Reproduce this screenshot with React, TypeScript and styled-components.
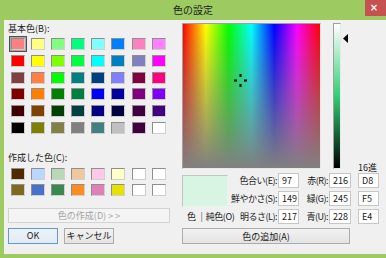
import React from "react";
import styled, { createGlobalStyle, css } from "styled-components";

const FONT = `"Noto Sans CJK JP", "Noto Sans", sans-serif`;

const GlobalStyle = createGlobalStyle`
  html, body { margin: 0; padding: 0; background: #9dcb62; }
  body { font-family: ${FONT}; }
  #root { width: 386px; height: 258px; overflow: hidden; }
`;

const BASIC = [
  ["#ff8080", "#ffff80", "#80ff80", "#00ff80", "#80ffff", "#0080ff", "#ff80c0", "#ff80ff"],
  ["#ff0000", "#ffff00", "#80ff00", "#00ff40", "#00ffff", "#0080c0", "#8080c0", "#ff00ff"],
  ["#804040", "#ff8040", "#00ff00", "#008080", "#004080", "#8080ff", "#800040", "#ff0080"],
  ["#800000", "#ff8000", "#008000", "#008040", "#0000ff", "#0000a0", "#800080", "#8000ff"],
  ["#400000", "#804000", "#004000", "#004040", "#000080", "#000040", "#400040", "#400080"],
  ["#000000", "#808000", "#808040", "#808080", "#408080", "#c0c0c0", "#400040", "#ffffff"],
];

const CUSTOM = [
  ["#502800", "#b8d8ff", "#b8d8b8", "#f0c8a0", "#ffc8e8", "#ffffc8", "#ffffff", "#ffffff"],
  ["#806820", "#4870c8", "#388850", "#ff8c20", "#e080b8", "#e8e000", "#ffffff", "#ffffff"],
];

const HUE = 97;
const SAT = 149;
const LUM = 217;
const SPEC_W = 139;
const SPEC_H = 146;

const Window = styled.div`
  width: 386px;
  height: 258px;
  background: #9dcb62;
  display: flex;
  flex-direction: column;
  font-family: ${FONT};
  font-size: 9px;
  color: #1a1a1a;
`;

const TitleBar = styled.div`
  height: 20px;
  display: grid;
  grid-template-columns: 1fr auto 1fr;
  align-items: start;
`;

const Title = styled.div`
  grid-column: 2;
  font-size: 10px;
  line-height: 20px;
  color: #1e1e1e;
`;

const CloseButton = styled.div`
  grid-column: 3;
  justify-self: end;
  width: 21px;
  height: 16px;
  background: #c75050;
  color: #fff;
  font-family: "DejaVu Sans", sans-serif;
  font-size: 10px;
  font-weight: bold;
  line-height: 16px;
  text-align: center;
  padding-right: 3px;
  box-sizing: border-box;
`;

const Body = styled.div`
  flex: 1;
  margin: 0 0 4px 4px;
  background: #f0f0f0;
  display: flex;
  padding-top: 3px;
  box-sizing: border-box;
`;

const LeftPane = styled.div`
  width: 178px;
  padding-left: 4px;
  box-sizing: border-box;
  display: flex;
  flex-direction: column;
`;

const SectionLabel = styled.div<{ $mt?: number }>`
  height: 11px;
  line-height: 11px;
  margin-top: ${(p) => p.$mt ?? 0}px;
  white-space: nowrap;
`;

const SwatchGrid = styled.div<{ $mt: number; $rowGap: number }>`
  display: grid;
  grid-template-columns: repeat(8, 14px);
  column-gap: 6.1px;
  row-gap: ${(p) => p.$rowGap}px;
  margin-top: ${(p) => p.$mt}px;
  padding-left: 3px;
`;

const Swatch = styled.div<{ $selected?: boolean }>`
  width: 14px;
  height: 12px;
  box-sizing: border-box;
  border: 1px solid;
  border-color: #8e8e8e #cfcfcf #cfcfcf #8e8e8e;
  ${(p) =>
    p.$selected &&
    css`
      outline: 1px solid #505050;
      outline-offset: 1px;
      box-shadow: 0 0 0 1px #a8a8a8;
    `}
`;

const Button = styled.button<{ $w: number; $h: number; $mt?: number; $primary?: boolean }>`
  width: ${(p) => p.$w}px;
  height: ${(p) => p.$h}px;
  margin-top: ${(p) => p.$mt ?? 0}px;
  box-sizing: border-box;
  padding: 0;
  font-family: ${FONT};
  font-size: 9px;
  color: #1a1a1a;
  border: 1px solid #acacac;
  background: linear-gradient(#f2f2f2, #e3e3e3);
  white-space: pre;
  ${(p) =>
    p.$primary &&
    css`
      border-color: #5f9ad6;
      background: linear-gradient(#eef3f9, #e2eaf3);
    `}
  &:disabled {
    color: #a3a3a3;
    border-color: #d3d3d3;
    background: #f4f4f4;
  }
`;

const ButtonRow = styled.div`
  display: flex;
  gap: 6px;
  margin-top: 5px;
`;

const RightPane = styled.div`
  flex: 1;
  display: flex;
  flex-direction: column;
`;

const TopRow = styled.div`
  display: flex;
  height: ${SPEC_H}px;
`;

const Spectrum = styled.div`
  position: relative;
  width: ${SPEC_W}px;
  height: ${SPEC_H}px;
  box-sizing: border-box;
  border: 1px solid;
  border-color: #a0a0a0 #e8e8e8 #e8e8e8 #a0a0a0;
  background: linear-gradient(to bottom, rgba(128, 128, 128, 0), rgba(128, 128, 128, 1)),
    linear-gradient(
      to right,
      #ff0000 0%,
      #ffff00 16.67%,
      #00ff00 33.33%,
      #00ffff 50%,
      #0000ff 66.67%,
      #ff00ff 83.33%,
      #ff0000 100%
    );
`;

const Crosshair = styled.svg`
  position: absolute;
  width: 13px;
  height: 13px;
  margin: -6px 0 0 -6px;
`;

const LumWrap = styled.div`
  position: relative;
  margin-left: 12px;
  width: 8px;
`;

const LumBar = styled.div`
  width: 8px;
  height: ${SPEC_H}px;
  box-sizing: border-box;
  border: 1px solid;
  border-color: #a0a0a0 #e8e8e8 #e8e8e8 #a0a0a0;
  background: linear-gradient(to bottom, #ffffff 0%, rgb(48, 207, 116) 50%, #000000 100%);
`;

const Arrow = styled.svg`
  position: absolute;
  left: 10px;
  width: 5px;
  height: 9px;
  margin-top: -4px;
`;

const HexHeader = styled.div`
  align-self: flex-end;
  margin-left: 17px;
  margin-bottom: -4px;
  line-height: 11px;
`;

const FieldsGrid = styled.div`
  display: grid;
  grid-template-columns: 50px 46px 21px 30px 22px 7px 21px;
  grid-template-rows: repeat(3, 15px);
  row-gap: 3px;
  margin-top: 4px;
`;

const Preview = styled.div`
  grid-column: 1;
  grid-row: 1 / span 2;
  margin-top: 2px;
  width: 46px;
  height: 32px;
  box-sizing: border-box;
  background: #d8f5e4;
  border: 1px solid;
  border-color: #c0c8c4 #e4f6ec #e4f6ec #c0c8c4;
`;

const PreviewCaption = styled.div`
  grid-column: 1;
  grid-row: 3;
  line-height: 15px;
  padding-left: 5px;
  white-space: pre;
  display: flex;
  letter-spacing: -0.4px;
`;

const CaptionBar = styled.span`
  color: #555;
  margin: 0 3px 0 5px;
`;

const FieldLabel = styled.div<{ $col: number; $row: number }>`
  grid-column: ${(p) => p.$col};
  grid-row: ${(p) => p.$row};
  display: flex;
  justify-content: flex-end;
  padding-right: 1px;
  line-height: 15px;
  white-space: nowrap;
  min-width: 0;
  letter-spacing: -0.5px;
`;

const Field = styled.div<{ $col: number; $row: number }>`
  grid-column: ${(p) => p.$col};
  grid-row: ${(p) => p.$row};
  box-sizing: border-box;
  height: 15px;
  border: 1px solid #c6c6c6;
  background: #fff;
  padding-left: 3px;
  line-height: 13px;
`;

const FIELDS = [
  { l1: "色合い(E):", v1: HUE, l2: "赤(R):", v2: 216, hex: "D8" },
  { l1: "鮮やかさ(S):", v1: SAT, l2: "緑(G):", v2: 245, hex: "F5" },
  { l1: "明るさ(L):", v1: LUM, l2: "青(U):", v2: 228, hex: "E4" },
];

export default function App() {
  const crossX = (HUE / 239) * (SPEC_W - 2) + 1;
  const crossY = (1 - SAT / 240) * (SPEC_H - 2) + 1;
  const arrowY = (1 - LUM / 240) * (SPEC_H - 2) + 1;

  return (
    <>
      <GlobalStyle />
      <Window>
        <TitleBar>
          <Title>色の設定</Title>
          <CloseButton>×</CloseButton>
        </TitleBar>
        <Body>
          <LeftPane>
            <SectionLabel>基本色(B):</SectionLabel>
            <SwatchGrid $mt={4} $rowGap={4.8}>
              {BASIC.flat().map((c, i) => (
                <Swatch key={i} $selected={i === 0} style={{ background: c }} />
              ))}
            </SwatchGrid>
            <SectionLabel $mt={18}>作成した色(C):</SectionLabel>
            <SwatchGrid $mt={5} $rowGap={4}>
              {CUSTOM.flat().map((c, i) => (
                <Swatch key={i} style={{ background: c }} />
              ))}
            </SwatchGrid>
            <Button $w={162} $h={15} $mt={12} disabled>
              {"色の作成(D) > >"}
            </Button>
            <ButtonRow>
              <Button $w={50} $h={16} $primary>
                OK
              </Button>
              <Button $w={50} $h={16}>
                キャンセル
              </Button>
            </ButtonRow>
          </LeftPane>
          <RightPane>
            <TopRow>
              <Spectrum>
                <Crosshair viewBox="0 0 13 13" style={{ left: crossX, top: crossY }}>
                  <g fill="#000">
                    <rect x="5.5" y="0" width="2" height="3" />
                    <rect x="5.5" y="10" width="2" height="3" />
                    <rect x="0" y="5.5" width="3" height="2" />
                    <rect x="10" y="5.5" width="3" height="2" />
                  </g>
                </Crosshair>
              </Spectrum>
              <LumWrap>
                <LumBar />
                <Arrow viewBox="0 0 5 9" style={{ top: arrowY }}>
                  <polygon points="0,4.5 5,0 5,9" fill="#000" />
                </Arrow>
              </LumWrap>
              <HexHeader>16進</HexHeader>
            </TopRow>
            <FieldsGrid>
              <Preview />
              <PreviewCaption>
                色<CaptionBar>|</CaptionBar>純色(O)
              </PreviewCaption>
              {FIELDS.map((f, i) => (
                <React.Fragment key={i}>
                  <FieldLabel $col={2} $row={i + 1}>{f.l1}</FieldLabel>
                  <Field $col={3} $row={i + 1}>{f.v1}</Field>
                  <FieldLabel $col={4} $row={i + 1}>{f.l2}</FieldLabel>
                  <Field $col={5} $row={i + 1}>{f.v2}</Field>
                  <Field $col={7} $row={i + 1}>{f.hex}</Field>
                </React.Fragment>
              ))}
            </FieldsGrid>
            <Button $w={168} $h={16} $mt={4}>
              色の追加(A)
            </Button>
          </RightPane>
        </Body>
      </Window>
    </>
  );
}
